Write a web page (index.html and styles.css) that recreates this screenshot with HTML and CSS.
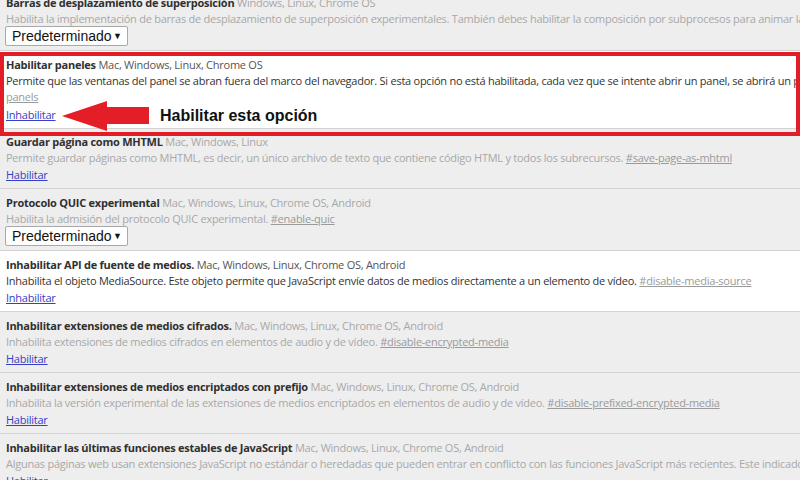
FILE: index.html
```html
<!DOCTYPE html>
<html lang="es">
<head>
<meta charset="utf-8">
<title>Experimentos</title>
<link rel="stylesheet" href="styles.css">
</head>
<body>
<div class="page">
  <div class="list">
    <div class="exp exp-select">
      <div><span class="title">Barras de desplazamiento de superposición</span> <span class="plat">Windows, Linux, Chrome OS</span></div>
      <div class="desc">Habilita la implementación de barras de desplazamiento de superposición experimentales. También debes habilitar la composición por subprocesos para animar las barras de desplazamiento. <span class="hash">#overlay-scrollbars</span></div>
      <div class="select"><span>Predeterminado</span><span class="caret">▼</span></div>
    </div>
    <div class="exp on exp-panels">
      <div><span class="title">Habilitar paneles</span> <span class="plat">Mac, Windows, Linux, Chrome OS</span></div>
      <div class="desc">Permite que las ventanas del panel se abran fuera del marco del navegador. Si esta opción no está habilitada, cada vez que se intente abrir un panel, se abrirá un popup. <span class="hash">#enable-</span><br><span class="hash">panels</span></div>
      <a class="act" href="#">Inhabilitar</a>
    </div>
    <div class="exp exp-tight">
      <div><span class="title">Guardar página como MHTML</span> <span class="plat">Mac, Windows, Linux</span></div>
      <div class="desc">Permite guardar páginas como MHTML, es decir, un único archivo de texto que contiene código HTML y todos los subrecursos. <span class="hash">#save-page-as-mhtml</span></div>
      <a class="act" href="#">Habilitar</a>
    </div>
    <div class="exp exp-select">
      <div><span class="title">Protocolo QUIC experimental</span> <span class="plat">Mac, Windows, Linux, Chrome OS, Android</span></div>
      <div class="desc">Habilita la admisión del protocolo QUIC experimental. <span class="hash">#enable-quic</span></div>
      <div class="select"><span>Predeterminado</span><span class="caret">▼</span></div>
    </div>
    <div class="exp on">
      <div><span class="title">Inhabilitar API de fuente de medios.</span> <span class="plat">Mac, Windows, Linux, Chrome OS, Android</span></div>
      <div class="desc">Inhabilita el objeto MediaSource. Este objeto permite que JavaScript envíe datos de medios directamente a un elemento de vídeo. <span class="hash">#disable-media-source</span></div>
      <a class="act" href="#">Inhabilitar</a>
    </div>
    <div class="exp">
      <div><span class="title">Inhabilitar extensiones de medios cifrados.</span> <span class="plat">Mac, Windows, Linux, Chrome OS, Android</span></div>
      <div class="desc">Inhabilita extensiones de medios cifrados en elementos de audio y de vídeo. <span class="hash">#disable-encrypted-media</span></div>
      <a class="act" href="#">Habilitar</a>
    </div>
    <div class="exp">
      <div><span class="title">Inhabilitar extensiones de medios encriptados con prefijo</span> <span class="plat">Mac, Windows, Linux, Chrome OS, Android</span></div>
      <div class="desc">Inhabilita la versión experimental de las extensiones de medios encriptados en elementos de audio y de vídeo. <span class="hash">#disable-prefixed-encrypted-media</span></div>
      <a class="act" href="#">Habilitar</a>
    </div>
    <div class="exp">
      <div><span class="title">Inhabilitar las últimas funciones estables de JavaScript</span> <span class="plat">Mac, Windows, Linux, Chrome OS, Android</span></div>
      <div class="desc">Algunas páginas web usan extensiones JavaScript no estándar o heredadas que pueden entrar en conflicto con las funciones JavaScript más recientes. Este indicador inhabilita la compatibilidad con esas funciones. <span class="hash">#disable-javascript-harmony-shipping</span></div>
      <a class="act" href="#">Habilitar</a>
    </div>
  </div>

  <div class="callout"></div>
  <svg class="arrow" width="92" height="34" viewBox="0 0 92 34" aria-hidden="true">
    <path d="M2 17 L47 2 L47 8 L89 8 L89 25 L47 25 L47 32 Z" fill="#e41e26"/>
  </svg>
  <span class="note">Habilitar esta opción</span>
</div>
</body>
</html>
```

FILE: styles.css
```css
html, body {
  margin: 0;
  padding: 0;
}
body {
  width: 800px;
  height: 480px;
  overflow: hidden;
  background: #eeeeee;
  font-family: "Open Sans", "Noto Sans", "DejaVu Sans", sans-serif;
  font-size: 11px;
  letter-spacing: -0.25px;
}
.page {
  position: relative;
  width: 800px;
  height: 480px;
  overflow: hidden;
}
.list {
  margin-top: -11px;
}
.exp {
  padding: 6px 6px 5px;
  border-bottom: 1px solid #d3d3d3;
  line-height: 16px;
  white-space: nowrap;
  overflow: hidden;
}
.exp.on {
  background: #ffffff;
}
.exp-select {
  padding-bottom: 4px;
}
.exp-tight {
  padding-top: 5px;
  padding-bottom: 5px;
}
.title {
  font-weight: bold;
  color: #303030;
}
.plat {
  color: #a8a8a8;
}
.on .plat {
  color: #555555;
}
.desc {
  color: #a8a8a8;
}
.on .desc {
  color: #333333;
}
.hash {
  color: #9a9a9a;
  text-decoration: underline;
}
.act {
  display: block;
  width: max-content;
  margin-top: 1px;
  color: #3340c8;
  text-decoration: underline;
}
.exp-panels .act {
  margin-top: 2px;
}
.select {
  display: flex;
  align-items: center;
  justify-content: space-between;
  box-sizing: border-box;
  width: 123px;
  height: 20px;
  margin: -1px 0 0 -1px;
  padding: 0 5px 0 6px;
  background: #ffffff;
  border: 1px solid #a9a9a9;
  border-radius: 2px;
  font-family: "Liberation Sans", Arial, sans-serif;
  font-size: 14px;
  letter-spacing: 0;
  color: #111111;
}
.caret {
  font-size: 9px;
  color: #111111;
}
.callout {
  position: absolute;
  left: 0;
  top: 52px;
  width: 800px;
  height: 84px;
  box-sizing: border-box;
  border: 4px solid #e31d25;
}
.arrow {
  position: absolute;
  left: 60px;
  top: 99px;
}
.note {
  position: absolute;
  left: 160px;
  top: 107px;
  font-family: "Liberation Sans", Arial, sans-serif;
  font-weight: bold;
  font-size: 16px;
  line-height: 18px;
  letter-spacing: 0;
  color: #111111;
}
```
